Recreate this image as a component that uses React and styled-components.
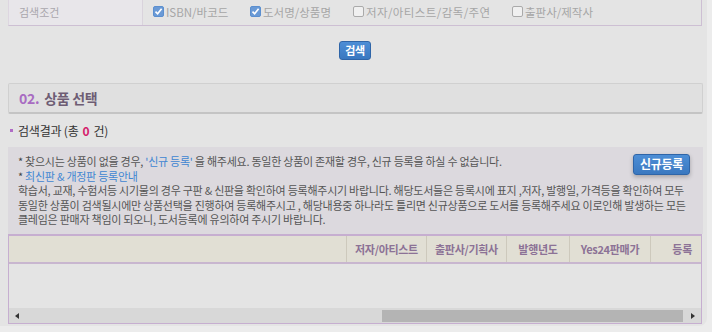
import styled, { createGlobalStyle } from 'styled-components';

const GlobalStyle = createGlobalStyle`
  html, body {
    margin: 0;
    padding: 0;
    background: #ececec;
  }
  body {
    font-family: "Noto Sans CJK KR", "Noto Sans", sans-serif;
  }
`;

const Panel = styled.div`
  width: 707px;
  height: 326px;
  box-sizing: border-box;
  background: #e4e4e4;
  border-radius: 0 0 8px 0;
  padding: 0 5px 0 8px;
  overflow: hidden;
`;

const CondRow = styled.div`
  display: flex;
  height: 26px;
  border-left: 1px solid #ddd6e0;
  border-right: 1px solid #cdbfd3;
  border-bottom: 1px solid #cdbfd3;
  box-sizing: border-box;
`;

const CondLabel = styled.div`
  width: 134px;
  flex-shrink: 0;
  background: #e8e6ea;
  border-right: 1px solid #d9d3dc;
  color: #aaa6ad;
  font-size: 11px;
  padding-left: 10px;
  display: flex;
  align-items: center;
  box-sizing: border-box;
  padding-bottom: 2px;
`;

const CondOptions = styled.div`
  display: flex;
  align-items: center;
  padding-left: 10px;
  padding-bottom: 2px;
`;

const Option = styled.label`
  display: flex;
  align-items: center;
  gap: 1px;
  width: ${p => p.$w}px;
  font-size: 11.5px;
  color: #a6a6a6;
  letter-spacing: ${p => p.$ls}px;
  white-space: nowrap;
`;

const Box = styled.span`
  width: 11px;
  height: 11px;
  box-sizing: border-box;
  border: 1px solid ${p => (p.$on ? '#5b8fcf' : '#aaa')};
  background: ${p => (p.$on ? '#6a9ad6' : '#f0f0f0')};
  border-radius: 2px;
  display: inline-flex;
  align-items: center;
  justify-content: center;
  margin-right: 1px;
`;

const ButtonRow = styled.div`
  display: flex;
  justify-content: center;
  padding-top: 10px;
  height: 57px;
  box-sizing: border-box;
`;

const BlueButton = styled.button`
  font-family: inherit;
  font-weight: 700;
  color: #fff;
  background: linear-gradient(#4d8ed6, #3a78c0);
  border: 1px solid #2f65a8;
  border-radius: 3px;
  font-size: ${p => (p.$big ? 12 : 11)}px;
  height: ${p => (p.$big ? 21 : 19)}px;
  padding: 0 ${p => (p.$big ? 6 : 5)}px;
  line-height: 1;
  letter-spacing: -0.3px;
  box-shadow: ${p => (p.$big ? '0 2px 4px rgba(0,0,0,0.25)' : 'none')};
  cursor: pointer;
`;

const SectionHead = styled.div`
  height: 31px;
  box-sizing: border-box;
  margin-right: -1px;
  background: #e0e0e0;
  border: 1px solid #d0d0d0;
  border-bottom: 2px solid #c4c4c4;
  border-radius: 2px;
  display: flex;
  align-items: center;
  padding-left: 10px;
  font-size: 14px;
  font-weight: 700;
  color: #6e5d74;
  letter-spacing: -0.3px;
`;

const Num = styled.span`
  color: #a86cc2;
  margin-right: 5px;
`;

const ResultLine = styled.div`
  display: flex;
  align-items: center;
  height: 33px;
  font-size: 12px;
  color: #333;
  letter-spacing: -0.2px;
  padding-bottom: 1px;
  box-sizing: border-box;
`;

const Dot = styled.span`
  width: 3px;
  height: 3px;
  background: #b06cc5;
  margin: 0 5px 0 2px;
`;

const Zero = styled.b`
  color: #d4216b;
  margin: 0 4px;
`;

const InfoBox = styled.div`
  position: relative;
  background: #dcd9de;
  height: 87px;
  box-sizing: border-box;
  padding: 7px 0 0 10px;
  margin-right: -1px;
`;

const InfoLine = styled.div`
  font-size: 11px;
  line-height: 14.5px;
  height: 14.5px;
  white-space: nowrap;
  color: ${p => (p.$link ? '#3f86d2' : '#555')};
  letter-spacing: -0.25px;
`;

const Star = styled.span`
  color: #444;
`;

const Quote = styled.span`
  color: #3f86d2;
`;

const NewButtonWrap = styled.div`
  position: absolute;
  top: 3px;
  right: 13px;
`;

const Table = styled.div`
  border: 1px solid #c6aed0;
  border-top-width: 2px;
  height: 90px;
  box-sizing: border-box;
  display: flex;
  flex-direction: column;
`;

const HeadRow = styled.div`
  display: grid;
  grid-template-columns: 338px 80px 80px 63px 81px 1fr;
  height: 28px;
  background: #e1dfd4;
  border-bottom: 2px solid #c8b6cf;
  box-sizing: border-box;
`;

const HeadCell = styled.div`
  display: flex;
  align-items: center;
  justify-content: ${p => p.$align || 'center'};
  padding-right: ${p => p.$pr || 0}px;
  border-right: ${p => (p.$last ? 'none' : '1px solid #cdc9bc')};
  font-size: 11px;
  font-weight: 700;
  color: #8c7296;
  letter-spacing: -0.3px;
  white-space: nowrap;
`;

const Body = styled.div`
  flex: 1;
`;

const ScrollBar = styled.div`
  height: 15px;
  background: #d8d8d8;
  display: flex;
  align-items: center;
  padding: 0 6px;
`;

const Arrow = styled.span`
  width: 0;
  height: 0;
  border-top: 3px solid transparent;
  border-bottom: 3px solid transparent;
  ${p => (p.$dir === 'left'
    ? 'border-right: 4px solid #333;'
    : 'border-left: 4px solid #333;')}
`;

const Track = styled.div`
  flex: 1;
  height: 100%;
  display: flex;
  align-items: center;
  padding: 0 8px 0 363px;
`;

const Thumb = styled.div`
  height: 12px;
  width: 100%;
  background: #b4b4b4;
`;

const Check = () => (
  <svg width="9" height="9" viewBox="0 0 9 9">
    <path d="M1.5 4.6 L3.6 6.8 L7.6 1.8" fill="none" stroke="#fff" strokeWidth="1.6" />
  </svg>
);

const options = [
  { label: 'ISBN/바코드', on: true, w: 97, ls: 0 },
  { label: '도서명/상품명', on: true, w: 103, ls: 0 },
  { label: '저자/아티스트/감독/주연', on: false, w: 159, ls: 0.4 },
  { label: '출판사/제작사', on: false, w: 120, ls: 0 },
];

const heads = [
  { t: '' },
  { t: '저자/아티스트' },
  { t: '출판사/기획사' },
  { t: '발행년도' },
  { t: 'Yes24판매가' },
  { t: '등록', align: 'flex-end', pr: 9, last: true },
];

function App() {
  return (
    <>
      <GlobalStyle />
      <Panel>
        <CondRow>
          <CondLabel>검색조건</CondLabel>
          <CondOptions>
            {options.map(o => (
              <Option key={o.label} $w={o.w} $ls={o.ls}>
                <Box $on={o.on}>{o.on && <Check />}</Box>
                {o.label}
              </Option>
            ))}
          </CondOptions>
        </CondRow>

        <ButtonRow>
          <div><BlueButton>검색</BlueButton></div>
        </ButtonRow>

        <SectionHead>
          <Num>02.</Num>상품 선택
        </SectionHead>

        <ResultLine>
          <Dot />검색결과 (총<Zero>0</Zero>건)
        </ResultLine>

        <InfoBox>
          <InfoLine>
            <Star>* </Star>찾으시는 상품이 없을 경우, <Quote>'신규 등록'</Quote> 을 해주세요. 동일한 상품이 존재할 경우, 신규 등록을 하실 수 없습니다.
          </InfoLine>
          <InfoLine $link><Star>* </Star>최신판 &amp; 개정판 등록안내</InfoLine>
          <InfoLine>
            학습서, 교재, 수험서등 시기물의 경우 구판 &amp; 신판을 확인하여 등록해주시기 바랍니다. 해당도서들은 등록시에 표지 ,저자, 발행일, 가격등을 확인하여 모두
          </InfoLine>
          <InfoLine>
            동일한 상품이 검색될시에만 상품선택을 진행하여 등록해주시고 , 해당내용중 하나라도 틀리면 신규상품으로 도서를 등록해주세요 이로인해 발생하는 모든
          </InfoLine>
          <InfoLine>클레임은 판매자 책임이 되오니, 도서등록에 유의하여 주시기 바랍니다.</InfoLine>
          <NewButtonWrap>
            <BlueButton $big>신규등록</BlueButton>
          </NewButtonWrap>
        </InfoBox>

        <Table>
          <HeadRow>
            {heads.map((h, i) => (
              <HeadCell key={i} $align={h.align} $pr={h.pr} $last={h.last}>{h.t}</HeadCell>
            ))}
          </HeadRow>
          <Body />
          <ScrollBar>
            <Arrow $dir="left" />
            <Track><Thumb /></Track>
            <Arrow $dir="right" />
          </ScrollBar>
        </Table>
      </Panel>
    </>
  );
}

export default App;
